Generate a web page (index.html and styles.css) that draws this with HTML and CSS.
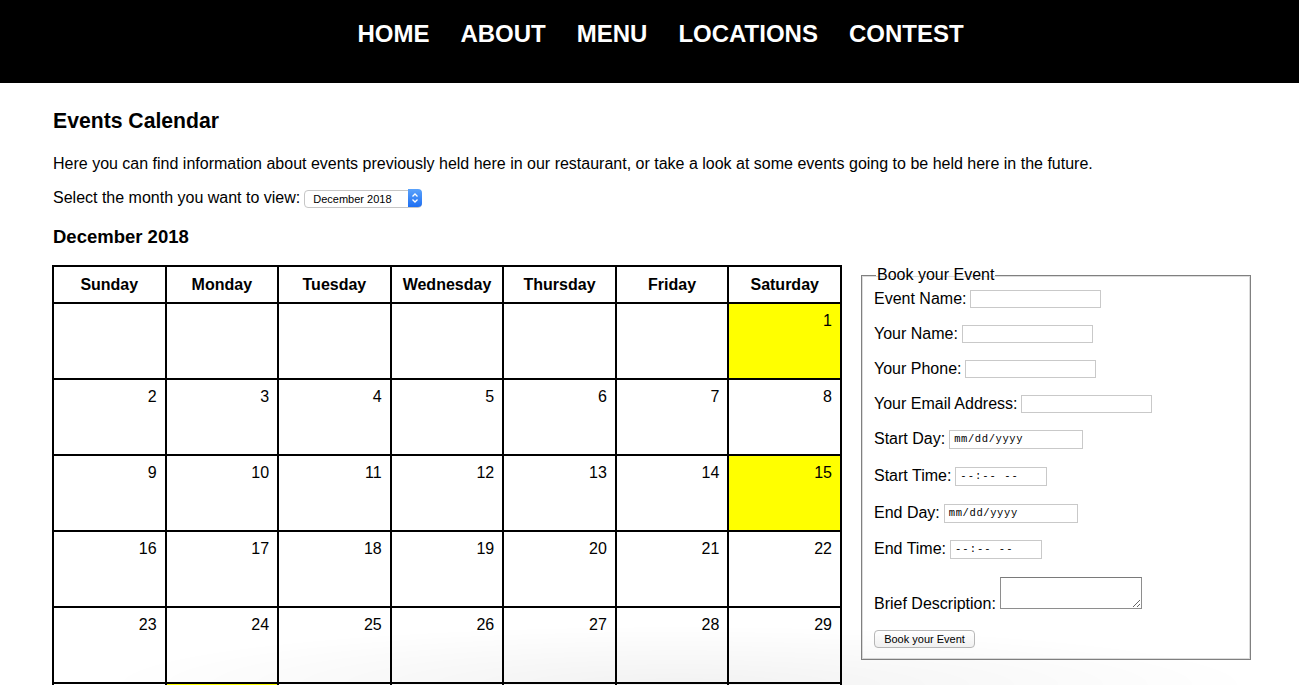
FILE: index.html
```html
<!DOCTYPE html>
<html>
<head>
<meta charset="utf-8">
<title>Events Calendar</title>
<link rel="stylesheet" href="styles.css">
</head>
<body>
<nav class="topnav">
  <a href="#">HOME</a>
  <a href="#">ABOUT</a>
  <a href="#">MENU</a>
  <a href="#">LOCATIONS</a>
  <a href="#">CONTEST</a>
</nav>
<main class="content">
  <h2 class="title">Events Calendar</h2>
  <p class="intro">Here you can find information about events previously held here in our restaurant, or take a look at some events going to be held here in the future.</p>
  <div class="month-row">
    <span>Select the month you want to view:</span>
    <span class="select-wrap">
      <select class="month-select">
        <option>December 2018</option>
      </select>
      <span class="select-arrow">
        <svg width="14" height="18" viewBox="0 0 14 18"><path d="M4.5 7.5 L7 5 L9.5 7.5 M4.5 10.5 L7 13 L9.5 10.5" fill="none" stroke="#fff" stroke-width="1.3"/></svg>
      </span>
    </span>
  </div>
  <h3 class="month-title">December 2018</h3>
  <div class="layout">
    <table class="calendar">
      <thead>
        <tr><th>Sunday</th><th>Monday</th><th>Tuesday</th><th>Wednesday</th><th>Thursday</th><th>Friday</th><th>Saturday</th></tr>
      </thead>
      <tbody>
        <tr><td></td><td></td><td></td><td></td><td></td><td></td><td class="event">1</td></tr>
        <tr><td>2</td><td>3</td><td>4</td><td>5</td><td>6</td><td>7</td><td>8</td></tr>
        <tr><td>9</td><td>10</td><td>11</td><td>12</td><td>13</td><td>14</td><td class="event">15</td></tr>
        <tr><td>16</td><td>17</td><td>18</td><td>19</td><td>20</td><td>21</td><td>22</td></tr>
        <tr><td>23</td><td>24</td><td>25</td><td>26</td><td>27</td><td>28</td><td>29</td></tr>
        <tr><td>30</td><td class="event">31</td><td></td><td></td><td></td><td></td><td></td></tr>
      </tbody>
    </table>
    <form class="booking">
      <fieldset class="book-set">
        <legend>Book your Event</legend>
        <div class="row first"><label>Event Name:</label><input class="txt" type="text"></div>
        <div class="row"><label>Your Name:</label><input class="txt" type="text"></div>
        <div class="row"><label>Your Phone:</label><input class="txt" type="text"></div>
        <div class="row"><label>Your Email Address:</label><input class="txt" type="text"></div>
        <div class="row tall"><label>Start Day:</label><span class="fake date">mm/dd/yyyy</span></div>
        <div class="row tall"><label>Start Time:</label><span class="fake time">--:-- --</span></div>
        <div class="row tall"><label>End Day:</label><span class="fake date">mm/dd/yyyy</span></div>
        <div class="row tall last"><label>End Time:</label><span class="fake time">--:-- --</span></div>
        <div class="row desc"><label>Brief Description:</label><textarea class="area"></textarea></div>
        <div class="btn-row"><button type="button" class="btn">Book your Event</button></div>
      </fieldset>
    </form>
  </div>
</main>
<div class="shade"></div>
</body>
</html>
```
FILE: styles.css
```css
html, body {
  margin: 0;
  padding: 0;
  background: #fff;
  font-family: "Liberation Sans", Arial, Helvetica, sans-serif;
  color: #000;
  overflow: hidden;
}

.topnav {
  box-sizing: border-box;
  height: 83px;
  background: #000;
  display: flex;
  justify-content: center;
  gap: 31px;
  padding: 20px 0 0 22px;
}

.topnav a {
  color: #fff;
  text-decoration: none;
  font-weight: bold;
  font-size: 24px;
  line-height: 28px;
  height: 28px;
}

.content {
  padding: 0 0 0 53px;
}

.title {
  margin: 26px 0 0;
  font-size: 21.2px;
  line-height: 24px;
  font-weight: bold;
}

.intro {
  margin: 22px 0 0;
  font-size: 16px;
  line-height: 18px;
}

.month-row {
  margin-top: 16px;
  height: 18px;
  display: flex;
  align-items: center;
  font-size: 16px;
  line-height: 18px;
  gap: 4px;
}

.select-wrap {
  position: relative;
  display: inline-block;
  width: 118px;
  height: 18px;
}

.month-select {
  -webkit-appearance: none;
  appearance: none;
  box-sizing: border-box;
  width: 118px;
  height: 18px;
  margin: 0;
  padding: 0 0 0 8px;
  border: 1px solid #c6c6c6;
  border-radius: 4px;
  background: #fff;
  font-family: "Liberation Sans", Arial, sans-serif;
  font-size: 11px;
  color: #000;
  outline: none;
}

.select-arrow {
  position: absolute;
  right: 0;
  top: 0;
  width: 14px;
  height: 18px;
  border-radius: 0 4px 4px 0;
  background: linear-gradient(#5aa2fb, #1f6ff2);
  display: block;
}

.select-arrow svg {
  display: block;
}

.month-title {
  margin: 19px 0 0;
  font-size: 18.5px;
  line-height: 22px;
  font-weight: bold;
}

.layout {
  margin-top: 18px;
  display: flex;
  align-items: flex-start;
  gap: 19px;
}

.calendar {
  border-collapse: collapse;
  width: 790px;
  margin: -1px 0 0 -1px;
  table-layout: fixed;
  flex: none;
}

.calendar th,
.calendar td {
  border: 2px solid #000;
  font-size: 16px;
  line-height: 18px;
}

.calendar th {
  height: 35px;
  padding: 0;
  font-weight: bold;
  text-align: center;
  vertical-align: middle;
}

.calendar td {
  height: 76px;
  padding: 8px 8px 0 0;
  box-sizing: border-box;
  text-align: right;
  vertical-align: top;
}

.calendar td.event {
  background: #ffff00;
}

.booking {
  margin: 0;
  flex: none;
}

.book-set {
  box-sizing: border-box;
  width: 390px;
  height: 394px;
  margin: 0;
  padding: 0 12px 0 12px;
  border: 1px solid #808080;
  box-shadow: inset 1px 1px 0 #dcdcdc, inset -1px -1px 0 #dcdcdc;
}

.book-set legend {
  padding: 0 1px;
  margin-left: 2px;
  font-size: 16px;
  line-height: 18px;
}

.row {
  display: flex;
  align-items: center;
  gap: 4px;
  height: 20px;
  margin-top: 15px;
  font-size: 16px;
  line-height: 18px;
}

.row.first {
  margin-top: 5px;
}

.row.tall {
  height: 22px;
}

.row.tall.last {
  margin-top: 14px;
}

.row.tall:nth-of-type(5) {
  margin-top: 14px;
}

.row.desc {
  align-items: flex-end;
  height: 34px;
  margin-top: 15px;
}

.row.desc label {
  line-height: 18px;
  margin-bottom: -4px;
}

.txt {
  box-sizing: border-box;
  width: 131px;
  height: 18px;
  margin: 0;
  padding: 0 3px;
  border: 1px solid #c9c9c9;
  font-size: 12px;
  background: #fff;
}

.fake {
  box-sizing: border-box;
  display: block;
  height: 19px;
  border: 1px solid #c9c9c9;
  font-family: "Liberation Mono", "Courier New", monospace;
  font-size: 10.5px;
  line-height: 17px;
  padding: 0 0 0 4px;
  white-space: pre;
  color: #000;
  letter-spacing: 0.6px;
  user-select: none;
}

.fake.date {
  width: 134px;
}

.fake.time {
  width: 92px;
  letter-spacing: 1px;
}

.area {
  box-sizing: border-box;
  width: 142px;
  height: 32px;
  margin: 0;
  border: 1px solid #8e8e8e;
  border-top-color: #7a7a7a;
  background: #fff;
  resize: both;
}

.btn-row {
  margin-top: 20px;
}

.btn {
  box-sizing: border-box;
  width: 101px;
  height: 18px;
  margin: 0;
  padding: 0;
  border: 1px solid #b8b8b8;
  border-radius: 4px;
  background: linear-gradient(#ffffff, #f3f3f3);
  font-family: "Liberation Sans", Arial, sans-serif;
  font-size: 11px;
  color: #000;
}

.shade {
  position: fixed;
  left: 100px;
  right: 40px;
  bottom: 0;
  height: 60px;
  background: radial-gradient(ellipse 50% 100% at 50% 100%, rgba(0,0,0,0.05), rgba(0,0,0,0) 100%);
  pointer-events: none;
}
```
